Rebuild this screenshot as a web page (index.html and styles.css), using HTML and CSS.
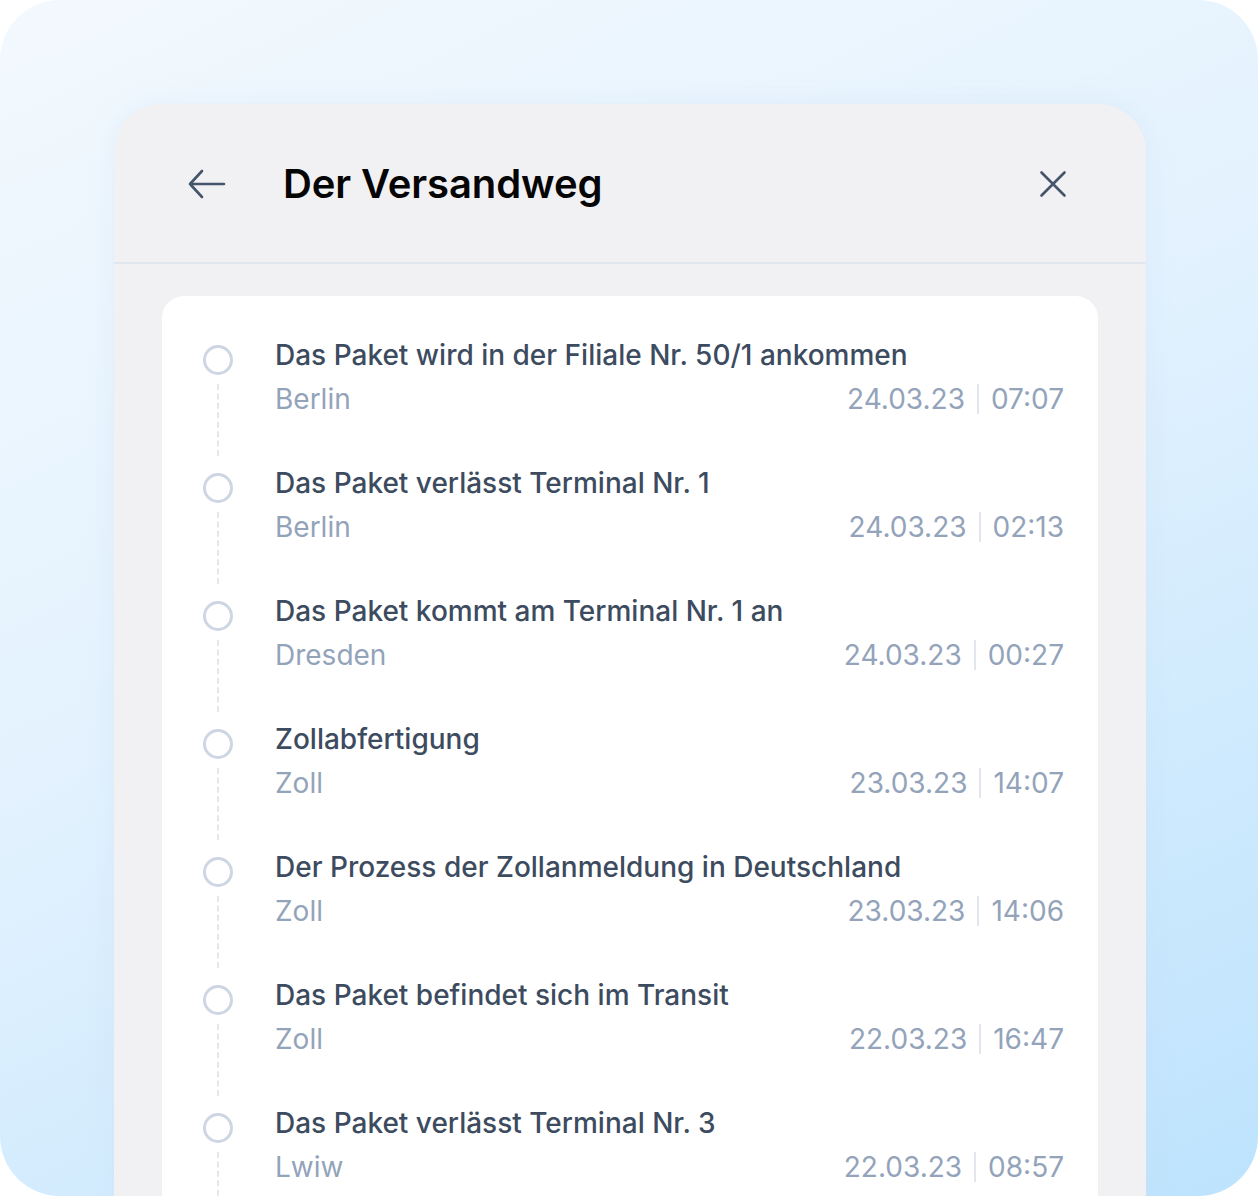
FILE: index.html
```html
<!DOCTYPE html>
<html lang="de">
<head>
<meta charset="utf-8">
<link rel="stylesheet" href="styles.css">
</head>
<body>
<div class="frame">
  <div class="panel">
    <header class="head">
      <svg class="icon back" width="40" height="40" viewBox="0 0 40 40"><path d="M38 20H4M16 7L4 20l12 13" fill="none" stroke="#44546a" stroke-width="2.6" stroke-linecap="round" stroke-linejoin="round"/></svg>
      <h1 class="title">Der Versandweg</h1>
      <svg class="icon close" width="32" height="32" viewBox="0 0 32 32"><path d="M4.5 4.5l23 23M27.5 4.5l-23 23" fill="none" stroke="#44546a" stroke-width="2.6" stroke-linecap="round"/></svg>
    </header>
    <div class="body">
      <div class="card">
        <div class="row">
          <div class="rail"><span class="dot"></span><span class="dash"></span></div>
          <div class="info">
            <div class="t">Das Paket wird in der Filiale Nr. 50/1 ankommen</div>
            <div class="meta"><span class="place">Berlin</span><span class="when">24.03.23<i class="sep"></i>07:07</span></div>
          </div>
        </div>
        <div class="row">
          <div class="rail"><span class="dot"></span><span class="dash"></span></div>
          <div class="info">
            <div class="t">Das Paket verlässt Terminal Nr. 1</div>
            <div class="meta"><span class="place">Berlin</span><span class="when">24.03.23<i class="sep"></i>02:13</span></div>
          </div>
        </div>
        <div class="row">
          <div class="rail"><span class="dot"></span><span class="dash"></span></div>
          <div class="info">
            <div class="t">Das Paket kommt am Terminal Nr. 1 an</div>
            <div class="meta"><span class="place">Dresden</span><span class="when">24.03.23<i class="sep"></i>00:27</span></div>
          </div>
        </div>
        <div class="row">
          <div class="rail"><span class="dot"></span><span class="dash"></span></div>
          <div class="info">
            <div class="t">Zollabfertigung</div>
            <div class="meta"><span class="place">Zoll</span><span class="when">23.03.23<i class="sep"></i>14:07</span></div>
          </div>
        </div>
        <div class="row">
          <div class="rail"><span class="dot"></span><span class="dash"></span></div>
          <div class="info">
            <div class="t">Der Prozess der Zollanmeldung in Deutschland</div>
            <div class="meta"><span class="place">Zoll</span><span class="when">23.03.23<i class="sep"></i>14:06</span></div>
          </div>
        </div>
        <div class="row">
          <div class="rail"><span class="dot"></span><span class="dash"></span></div>
          <div class="info">
            <div class="t">Das Paket befindet sich im Transit</div>
            <div class="meta"><span class="place">Zoll</span><span class="when">22.03.23<i class="sep"></i>16:47</span></div>
          </div>
        </div>
        <div class="row">
          <div class="rail"><span class="dot"></span><span class="dash"></span></div>
          <div class="info">
            <div class="t">Das Paket verlässt Terminal Nr. 3</div>
            <div class="meta"><span class="place">Lwiw</span><span class="when">22.03.23<i class="sep"></i>08:57</span></div>
          </div>
        </div>
      </div>
    </div>
  </div>
</div>
</body>
</html>
```
FILE: styles.css
```css
* { box-sizing: border-box; }
html, body { margin: 0; padding: 0; background: #ffffff; }
body { font-family: Inter, "Noto Sans", sans-serif; }
.frame {
  width: 1258px;
  height: 1196px;
  border-radius: 60px;
  overflow: hidden;
  background: linear-gradient(155deg, #f3f9fe 0%, #e3f2fe 45%, #bde3fd 100%);
  padding: 104px 112px 0 114px;
}
.panel {
  width: 1032px;
  height: 1092px;
  background: #f1f1f3;
  border-radius: 48px 48px 0 0;
  overflow: hidden;
  box-shadow: 0 0 24px rgba(200, 220, 240, 0.35);
}
.head {
  height: 160px;
  border-bottom: 2px solid #e2e7ef;
  display: flex;
  align-items: center;
  padding: 0 72px 0 72px;
}
.icon { display: block; flex: none; }
.back { margin-top: 2px; }
.title {
  margin: 0 0 0 57px;
  font-size: 40px;
  font-weight: 600;
  color: #050505;
  letter-spacing: -0.1px;
  flex: 1;
}
.close { margin-top: 2px; margin-right: 5px; }
.body { padding: 32px 48px 0; }
.card {
  background: #ffffff;
  border-radius: 22px;
  padding: 36px 34px 0 41px;
  height: 1000px;
}
.row {
  display: flex;
  height: 128px;
}
.rail {
  width: 30px;
  display: flex;
  flex-direction: column;
  align-items: center;
  padding-top: 13px;
  flex: none;
}
.dot {
  width: 30px;
  height: 30px;
  border-radius: 50%;
  border: 3px solid #cdd6e2;
  flex: none;
}
.dash {
  margin-top: 9px;
  width: 0;
  height: 72px;
  border-left: 2px dashed #e2e7ee;
}
.info { flex: 1; margin-left: 42px; }
.t {
  font-size: 28px;
  font-weight: 500;
  color: #3d4b5f;
  line-height: 52px;
  height: 50px;
  margin-top: -3px;
}
.meta {
  display: flex;
  justify-content: space-between;
  font-size: 28px;
  color: #93a3ba;
  line-height: 40px;
}
.when { display: flex; align-items: center; }
.sep {
  display: inline-block;
  width: 2px;
  height: 30px;
  background: #e1e6ed;
  margin: 0 12px;
}
```
